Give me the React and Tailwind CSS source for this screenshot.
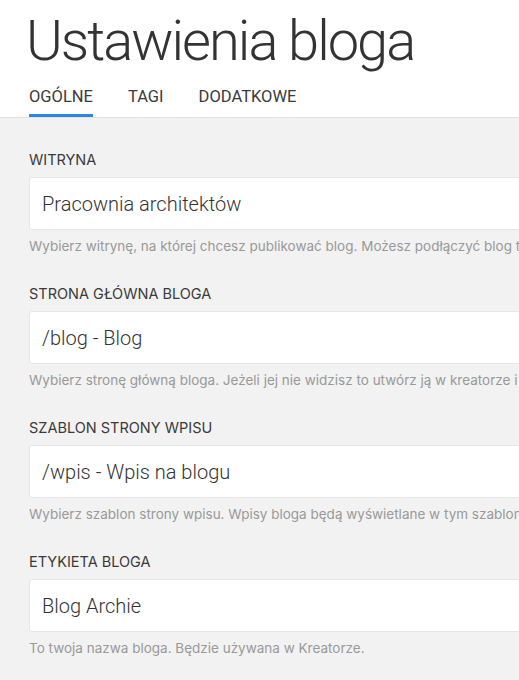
import React, { useState } from "react";

const fields = [
  {
    label: "WITRYNA",
    value: "Pracownia architektów",
    hint: "Wybierz witrynę, na której chcesz publikować blog. Możesz podłączyć blog tylko do jednej witryny.",
  },
  {
    label: "STRONA GŁÓWNA BLOGA",
    value: "/blog - Blog",
    hint: "Wybierz stronę główną bloga. Jeżeli jej nie widzisz to utwórz ją w kreatorze i wróć tutaj.",
  },
  {
    label: "SZABLON STRONY WPISU",
    value: "/wpis - Wpis na blogu",
    hint: "Wybierz szablon strony wpisu. Wpisy bloga będą wyświetlane w tym szablonie.",
  },
  {
    label: "ETYKIETA BLOGA",
    value: "Blog Archie",
    hint: "To twoja nazwa bloga. Będzie używana w Kreatorze.",
  },
];

const tabs = ["OGÓLNE", "TAGI", "DODATKOWE"];

export default function App() {
  const [active, setActive] = useState(0);

  return (
    <div className="w-full min-h-[680px] overflow-hidden bg-[#f2f2f2]">
      {/* Header */}
      <div className="bg-white border-b border-[#e2e2e2]">
        <h1 className="pl-[26px] pt-[13px] text-[56px] leading-[56px] font-light tracking-[-2px] text-[#333] font-['Roboto',sans-serif] whitespace-nowrap">
          Ustawienia bloga
        </h1>
        <div className="flex gap-[35px] pl-[29px] mt-[18px] font-['Roboto',sans-serif]">
          {tabs.map((t, i) => (
            <button
              key={t}
              type="button"
              onClick={() => setActive(i)}
              className="flex flex-col text-[16.5px] leading-[20px] text-[#3a3a3a]"
            >
              <span className="pb-[7px]">{t}</span>
              <span className={"h-[3px] w-full " + (active === i ? "bg-[#2a86e6]" : "bg-transparent")} />
            </button>
          ))}
        </div>
      </div>

      {/* Form */}
      <div className="pt-[32px] pl-[29px] font-['Inter',sans-serif]">
        {fields.map((f) => (
          <div key={f.label} className="mb-[29px]">
            <div className="text-[14.5px] leading-[20px] text-[#3a3a3a] mb-[7px]">{f.label}</div>
            <div className="w-[620px] h-[53px] bg-white border border-[#e6e6e6] rounded-[3px] flex items-center pl-[12px] text-[20px] font-light text-[#333] font-['Roboto',sans-serif]">
              {f.value}
            </div>
            <div className="mt-[7px] text-[13.5px] leading-[18px] text-[#999] whitespace-nowrap">{f.hint}</div>
          </div>
        ))}
      </div>
    </div>
  );
}
